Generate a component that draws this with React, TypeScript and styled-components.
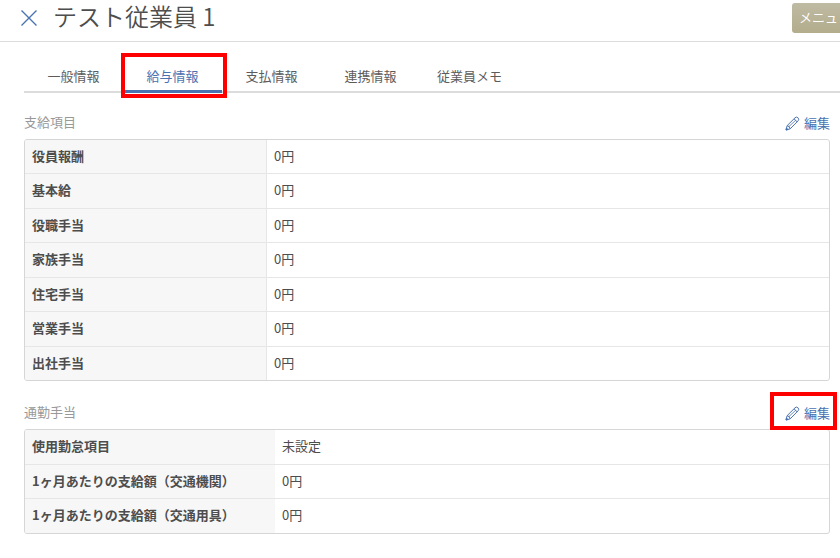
import React from "react";
import styled, { createGlobalStyle } from "styled-components";

const GlobalStyle = createGlobalStyle`
  * { box-sizing: border-box; }
  body {
    margin: 0;
    background: #fff;
    color: #4d4d4d;
    font-family: "Noto Sans CJK JP", "Noto Sans", sans-serif;
    font-size: 13px;
    line-height: 20px;
    overflow-x: hidden;
  }
  button { font: inherit; border: 0; cursor: pointer; }
`;

const Header = styled.header`
  display: flex;
  align-items: flex-start;
  height: 42px;
  padding-left: 20px;
  border-bottom: 1px solid #dcdcdc;
`;

const CloseButton = styled.button`
  display: flex;
  margin: 9px 15px 0 0;
  padding: 0;
  background: none;
  color: #4a72b0;
`;

const Title = styled.h1`
  flex: 1;
  margin: 0;
  font-size: 24px;
  font-weight: 350;
  line-height: 32px;
`;

const MenuButton = styled.button`
  height: 30px;
  margin-top: 3px;
  padding: 0 2px 2px 7px;
  border-radius: 3px 0 0 3px;
  background: linear-gradient(#bfbaa3, #b3ad8c);
  color: #fff;
  white-space: nowrap;
`;

const Main = styled.main`
  padding: 18px 10px 24px 24px;
`;

const TabBar = styled.nav`
  display: flex;
  height: 33px;
  margin-right: -10px;
  border-bottom: 2px solid #dcdcdc;
`;

const Highlight = styled.span`
  position: absolute;
  border: 4px solid #f00;
  pointer-events: none;
`;

const TabHighlight = styled(Highlight)`
  inset: -7px -5px -8px -2px;
`;

const EditHighlight = styled(Highlight)`
  inset: -10px -7px -7px -15px;
`;

const Tab = styled.button<{ $active?: boolean }>`
  position: relative;
  width: 99px;
  height: 33px;
  padding: 1px 0 0;
  background: none;
  color: ${(p) => (p.$active ? "#4a72b0" : "#5c5c5c")};
  border-bottom: 3px solid ${(p) => (p.$active ? "#4a72b0" : "transparent")};
  white-space: nowrap;
`;

const Section = styled.section`
  margin-top: 19px;

  & + & { margin-top: 21px; }
`;

const SectionHeader = styled.div`
  display: flex;
  align-items: center;
  justify-content: space-between;
  margin-bottom: 6px;
`;

const SectionTitle = styled.h2`
  margin: 0;
  padding-bottom: 1px;
  color: #999;
  font-size: 13px;
  font-weight: 400;
`;

const EditButton = styled.button`
  position: relative;
  display: flex;
  align-items: center;
  gap: 4px;
  height: 21px;
  padding: 1px 0 0;
  background: none;
  color: #4a72b0;
`;

const InfoTable = styled.table`
  width: 100%;
  table-layout: fixed;
  border: 1px solid #d6d6d6;
  border-radius: 3px;
  border-collapse: separate;
  border-spacing: 0;
  overflow: hidden;
`;

const Row = styled.tr<{ $tall: boolean }>`
  height: ${(p) => (p.$tall ? 35 : 34)}px;

  & > * { border-bottom: 1px solid #e6e6e6; }
  &:last-child { height: ${(p) => (p.$tall ? 34 : 33)}px; }
  &:last-child > * { border-bottom: 0; }
`;

const Label = styled.th<{ $wide: boolean }>`
  width: ${(p) => (p.$wide ? 250 : 242)}px;
  padding: 0 7px 2px;
  ${(p) => (p.$wide ? "" : "border-right: 1px solid #e6e6e6;")}
  background: #f7f7f7;
  font-weight: 700;
  text-align: left;
  white-space: nowrap;
`;

const Value = styled.td`
  padding: 0 7px 2px;
`;

function CloseIcon() {
  return (
    <svg width="18" height="18" viewBox="0 0 18 18" fill="none" stroke="currentColor" strokeWidth="1.4" aria-hidden="true">
      <path d="M1.5 1.5 16.5 16.5M16.5 1.5 1.5 16.5" />
    </svg>
  );
}

function PencilIcon() {
  return (
    <svg width="15" height="15" viewBox="0 0 15 15" fill="none" stroke="currentColor" strokeWidth="1" strokeLinejoin="round" aria-hidden="true">
      <path d="M1 14 2.1 9.7 10 1.8Q11.4.4 12.9 1.7 14.5 3.3 13.1 4.8L5.2 12.8Z" />
      <path d="M2.1 9.7Q4.8 10 5.2 12.8M9 2.8 12.1 5.8" />
      <path d="M3.8 10.7 10.6 4.3" strokeWidth="0.8" />
      <path d="M1 14 1.5 12 3 13.5Z" fill="currentColor" />
    </svg>
  );
}

const tabs = ["一般情報", "給与情報", "支払情報", "連携情報", "従業員メモ"];

const payItems = ["役員報酬", "基本給", "役職手当", "家族手当", "住宅手当", "営業手当", "出社手当"].map(
  (label) => [label, "0円"],
);

const commuteItems = [
  ["使用勤怠項目", "未設定"],
  ["1ヶ月あたりの支給額（交通機関）", "0円"],
  ["1ヶ月あたりの支給額（交通用具）", "0円"],
];

interface InfoSectionProps {
  title: string;
  items: string[][];
  wide?: boolean;
  highlighted?: boolean;
}

function InfoSection({ title, items, wide = false, highlighted = false }: InfoSectionProps) {
  return (
    <Section>
      <SectionHeader>
        <SectionTitle>{title}</SectionTitle>
        <EditButton type="button">
          <PencilIcon />
          編集
          {highlighted && <EditHighlight />}
        </EditButton>
      </SectionHeader>
      <InfoTable>
        <tbody>
          {items.map(([label, value], i) => (
            <Row key={label} $tall={(i % 2 === 0) === wide}>
              <Label scope="row" $wide={wide}>{label}</Label>
              <Value>{value}</Value>
            </Row>
          ))}
        </tbody>
      </InfoTable>
    </Section>
  );
}

export default function App() {
  return (
    <>
      <GlobalStyle />
      <Header>
        <CloseButton type="button" aria-label="閉じる"><CloseIcon /></CloseButton>
        <Title>テスト従業員 1</Title>
        <MenuButton type="button">メニュ</MenuButton>
      </Header>
      <Main>
        <TabBar>
          {tabs.map((tab) => {
            const active = tab === "給与情報";
            return (
              <Tab key={tab} type="button" $active={active} aria-current={active ? "page" : undefined}>
                {tab}
                {active && <TabHighlight />}
              </Tab>
            );
          })}
        </TabBar>
        <InfoSection title="支給項目" items={payItems} />
        <InfoSection title="通勤手当" items={commuteItems} wide highlighted />
      </Main>
    </>
  );
}
